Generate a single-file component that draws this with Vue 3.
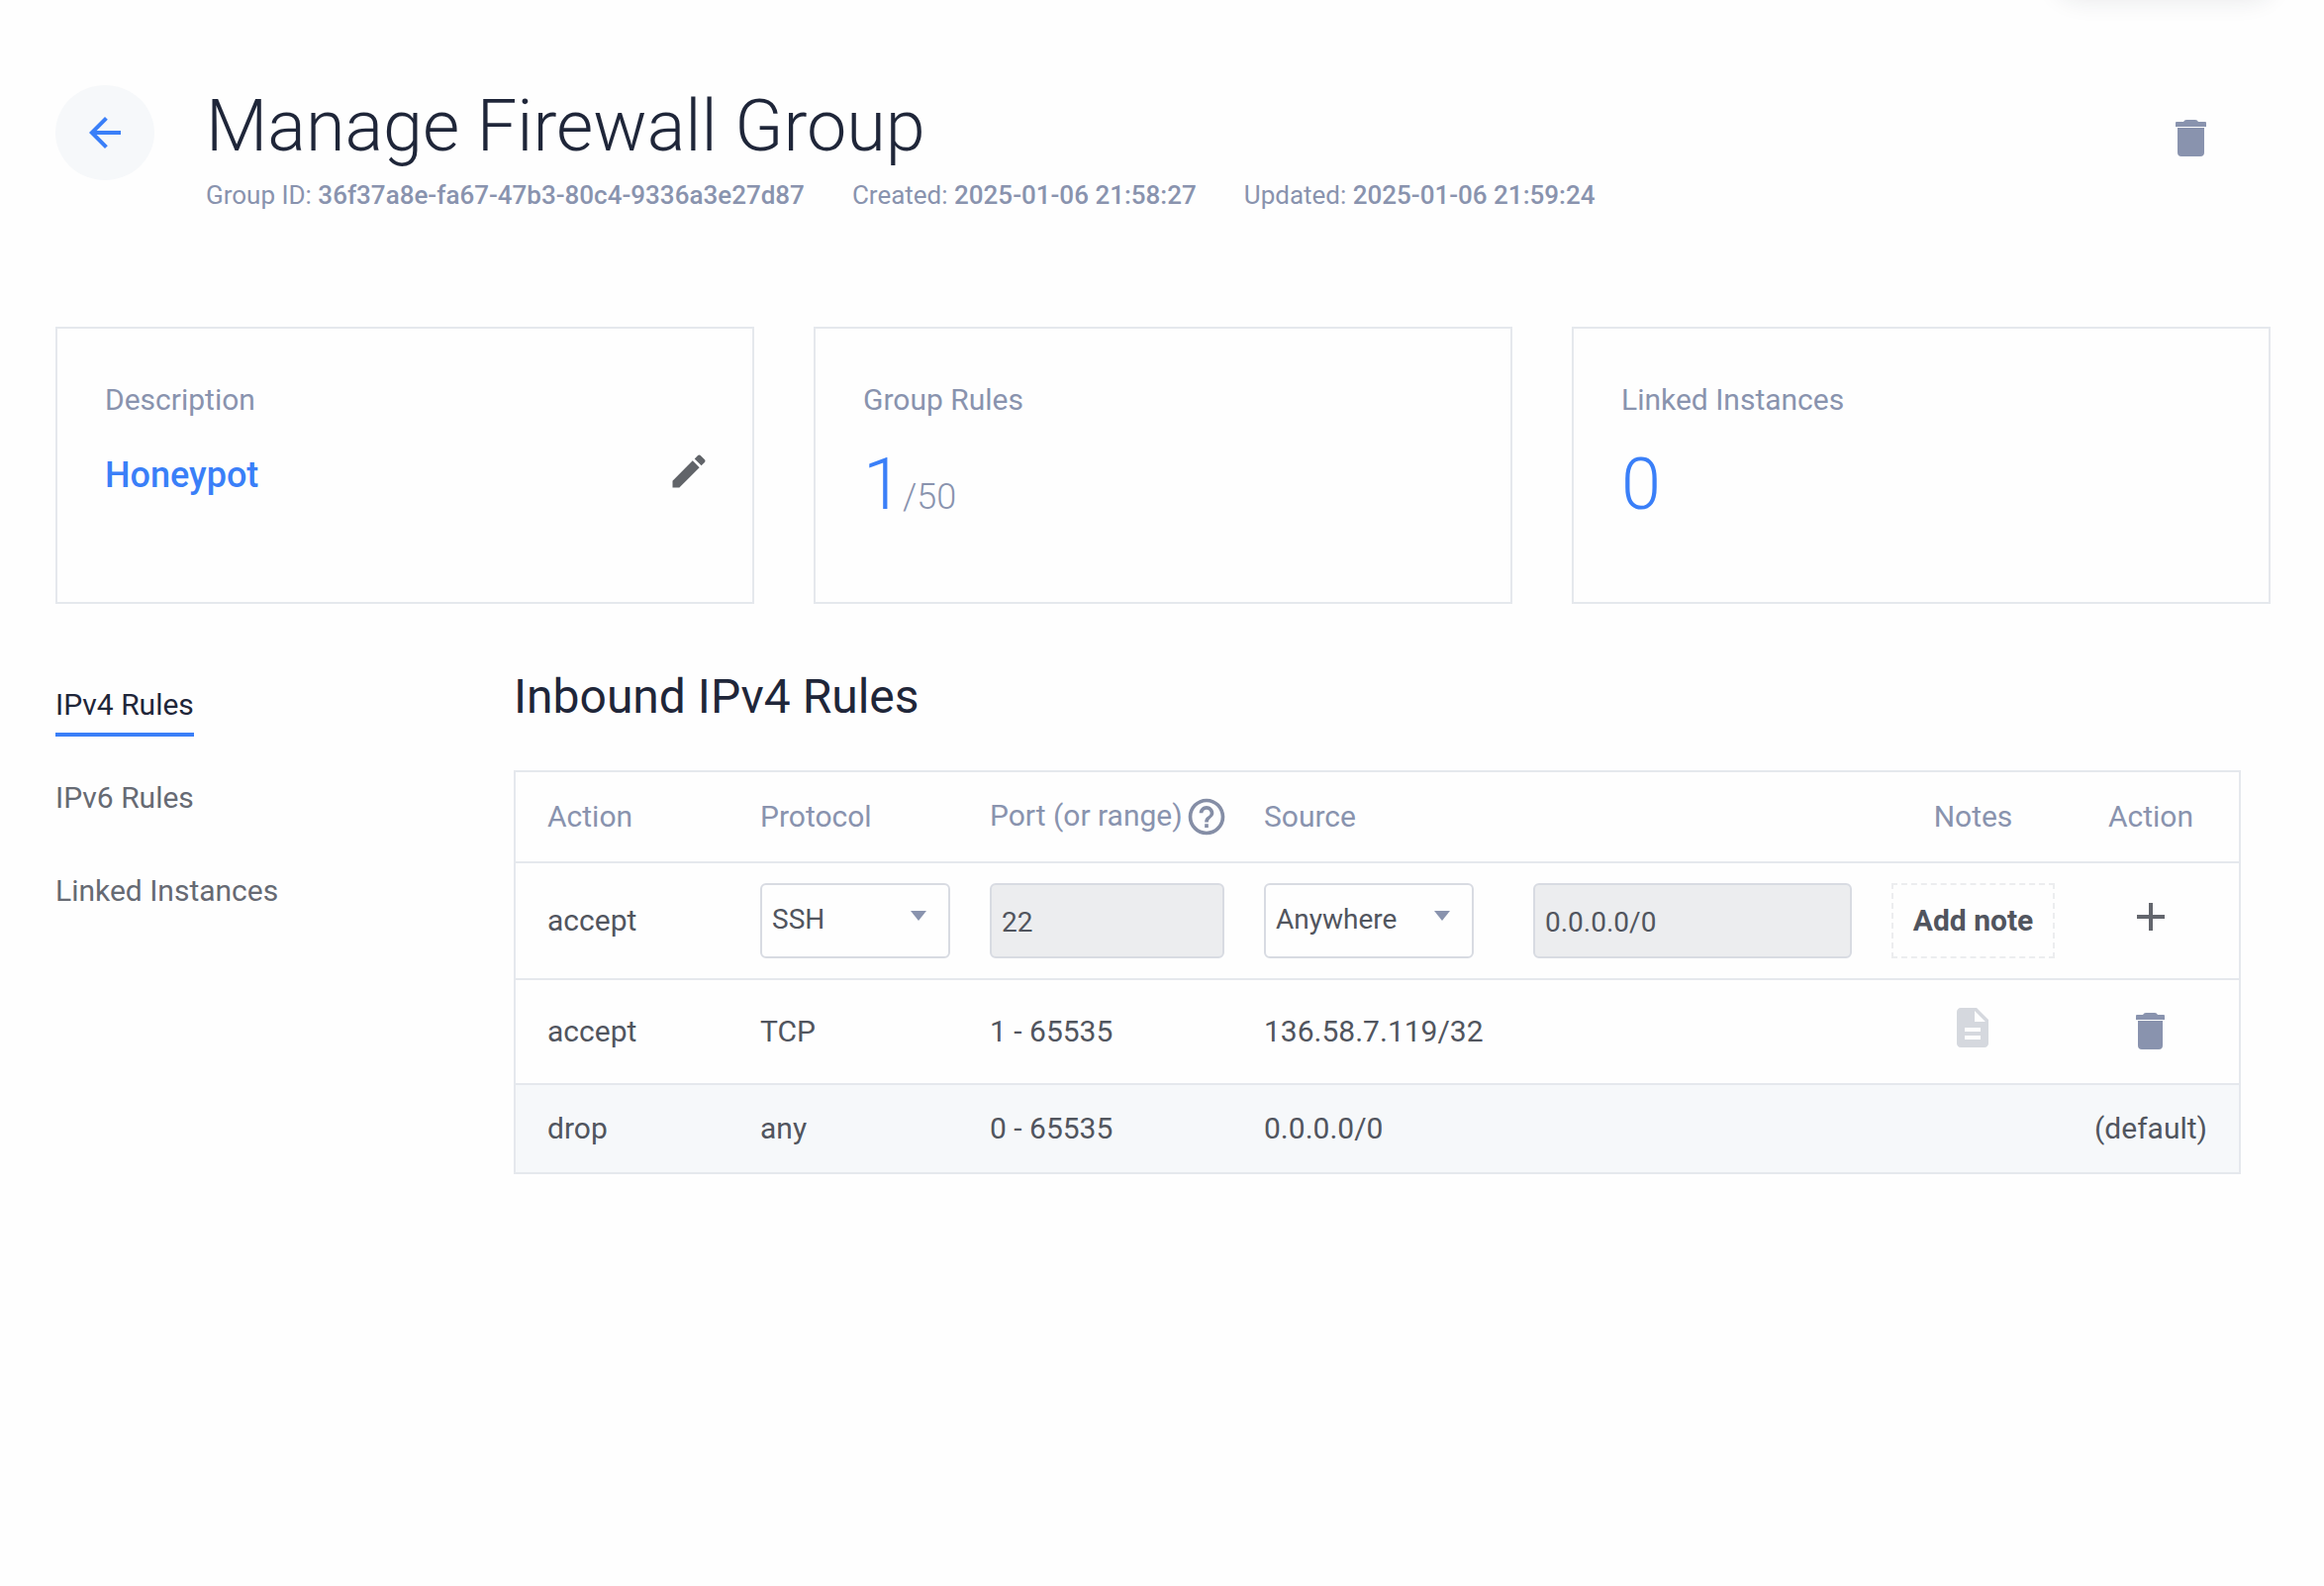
<script setup>
import { reactive } from "vue";

const local_data = reactive({
    group: {
        id: "36f37a8e-fa67-47b3-80c4-9336a3e27d87",
        created: "2025-01-06 21:58:27",
        updated: "2025-01-06 21:59:24",
        description: "Honeypot",
        rules: 1,
        maxRules: 50,
        instances: 0,
    },
    tabs: ["IPv4 Rules", "IPv6 Rules", "Linked Instances"],
    activeTab: 0,
    newRule: {
        action: "accept",
        protocol: "SSH",
        port: "22",
        sourceType: "Anywhere",
        source: "0.0.0.0/0",
    },
    rules: [
        {
            action: "accept",
            protocol: "TCP",
            port: "1 - 65535",
            source: "136.58.7.119/32",
        },
    ],
});

function openTab(index) {
    local_data.activeTab = index;
}
function deleteRule(index) {
    local_data.rules.splice(index, 1);
}
</script>
<template>
    <div class="page">
        <div class="top_shadow"></div>
        <div class="header">
            <button class="back">
                <svg width="48" height="48" viewBox="0 0 24 24">
                    <path
                        d="M20 11H7.83l5.59-5.59L12 4l-8 8 8 8 1.41-1.41L7.83 13H20v-2z"
                    />
                </svg>
            </button>
            <div class="header_text">
                <h1>Manage Firewall Group</h1>
                <div class="meta">
                    <div>Group ID: <b>{{ local_data.group.id }}</b></div>
                    <div>Created: <b>{{ local_data.group.created }}</b></div>
                    <div>Updated: <b>{{ local_data.group.updated }}</b></div>
                </div>
            </div>
            <button class="delete_group">
                <svg width="31" height="37" viewBox="0 0 31 37">
                    <path
                        d="M8 2q1-2 3-2h9q2 0 3 2h7q1 0 1 1v4H0V3q0-1 1-1zM2 8h27v25q0 4-4 4H6q-4 0-4-4z"
                    />
                </svg>
            </button>
        </div>
        <div class="cards">
            <div class="card">
                <div class="card_label">Description</div>
                <div class="card_name">
                    <span>{{ local_data.group.description }}</span>
                    <svg width="44" height="44" viewBox="0 0 24 24">
                        <path
                            d="M3 17.25V21h3.75L17.81 9.94l-3.75-3.75L3 17.25zM20.71 7.04c.39-.39.39-1.02 0-1.41l-2.34-2.34c-.39-.39-1.02-.39-1.41 0l-1.83 1.83 3.75 3.75 1.83-1.83z"
                        />
                    </svg>
                </div>
            </div>
            <div class="card">
                <div class="card_label">Group Rules</div>
                <div class="card_number">
                    {{ local_data.group.rules
                    }}<span>/{{ local_data.group.maxRules }}</span>
                </div>
            </div>
            <div class="card">
                <div class="card_label">Linked Instances</div>
                <div class="card_number">{{ local_data.group.instances }}</div>
            </div>
        </div>
        <div class="content">
            <div class="tabs">
                <div
                    v-for="(tab, index) in local_data.tabs"
                    :key="tab"
                    class="tab"
                    :class="{ tab_active: index == local_data.activeTab }"
                    @click="openTab(index)"
                >
                    {{ tab }}
                </div>
            </div>
            <div class="rules">
                <h2>Inbound IPv4 Rules</h2>
                <div class="table">
                    <div class="row row_head">
                        <div>Action</div>
                        <div>Protocol</div>
                        <div class="port_head">
                            <span>Port (or range)</span>
                            <svg width="44" height="44" viewBox="0 0 24 24">
                                <path
                                    d="M11 18h2v-2h-2v2zm1-16C6.48 2 2 6.48 2 12s4.48 10 10 10 10-4.48 10-10S17.52 2 12 2zm0 18c-4.41 0-8-3.59-8-8s3.59-8 8-8 8 3.59 8 8-3.59 8-8 8zm0-14c-2.21 0-4 1.79-4 4h2c0-1.1.9-2 2-2s2 .9 2 2c0 2-3 1.75-3 5h2c0-2.25 3-2.5 3-5 0-2.21-1.79-4-4-4z"
                                />
                            </svg>
                        </div>
                        <div>Source</div>
                        <div></div>
                        <div class="center">Notes</div>
                        <div class="center">Action</div>
                    </div>
                    <div class="row row_new">
                        <div>{{ local_data.newRule.action }}</div>
                        <div class="field select protocol">
                            <span>{{ local_data.newRule.protocol }}</span>
                            <i class="caret"></i>
                        </div>
                        <div class="field disabled port">
                            {{ local_data.newRule.port }}
                        </div>
                        <div class="field select source_type">
                            <span>{{ local_data.newRule.sourceType }}</span>
                            <i class="caret"></i>
                        </div>
                        <div class="field disabled source">
                            {{ local_data.newRule.source }}
                        </div>
                        <div class="add_note">Add note</div>
                        <div class="center">
                            <svg
                                class="icon_add"
                                width="48"
                                height="48"
                                viewBox="0 0 24 24"
                            >
                                <path d="M19 13h-6v6h-2v-6H5v-2h6V5h2v6h6v2z" />
                            </svg>
                        </div>
                    </div>
                    <div
                        v-for="(rule, index) in local_data.rules"
                        :key="index"
                        class="row row_rule"
                    >
                        <div>{{ rule.action }}</div>
                        <div>{{ rule.protocol }}</div>
                        <div>{{ rule.port }}</div>
                        <div>{{ rule.source }}</div>
                        <div></div>
                        <div class="center">
                            <svg
                                class="icon_note"
                                width="48"
                                height="48"
                                viewBox="0 0 24 24"
                            >
                                <path
                                    d="M14 2H6c-1.1 0-1.99.9-1.99 2L4 20c0 1.1.89 2 1.99 2H18c1.1 0 2-.9 2-2V8l-6-6zm2 16H8v-2h8v2zm0-4H8v-2h8v2zm-3-5V3.5L18.5 9H13z"
                                />
                            </svg>
                        </div>
                        <div class="center" @click="deleteRule(index)">
                            <svg
                                class="icon_delete"
                                width="29"
                                height="37"
                                viewBox="0 0 29 37"
                            >
                                <path
                                    d="M7 2q1-2 3-2h9q2 0 3 2h6q1 0 1 1v4H0V3q0-1 1-1zM2 8h25v25q0 4-4 4H6q-4 0-4-4z"
                                />
                            </svg>
                        </div>
                    </div>
                    <div class="row row_default">
                        <div>drop</div>
                        <div>any</div>
                        <div>0 - 65535</div>
                        <div>0.0.0.0/0</div>
                        <div></div>
                        <div></div>
                        <div class="center">(default)</div>
                    </div>
                </div>
            </div>
        </div>
    </div>
</template>
<style>
body {
    background: #fefefe;
}
</style>
<style scoped>
.page {
    position: relative;
    box-sizing: border-box;
    width: 2348px;
    height: 1602px;
    padding: 86px 54px 0 56px;
    overflow: hidden;
    font-family: Roboto, sans-serif;
    font-size: 30px;
    line-height: 36px;
    color: #51555e;
}

/* lower edge of the floating pill that sits above the page */
.top_shadow {
    position: absolute;
    top: -66px;
    left: 2074px;
    width: 226px;
    height: 60px;
    border-radius: 30px;
    box-shadow: 0 6px 24px rgba(31, 38, 57, 0.1);
}

button {
    display: flex;
    align-items: center;
    justify-content: center;
    padding: 0;
    border: none;
    background: none;
}

.header {
    display: flex;
    height: 244px;
}
.back {
    width: 100px;
    height: 96px;
    border-radius: 50%;
    background: #f6f8fa;
    fill: #3a7ff8;
}
.header_text {
    flex: 1;
    margin-left: 52px;
}
h1 {
    margin: 0;
    font-size: 72px;
    font-weight: 300;
    line-height: 84px;
    color: #1f2639;
}
.meta {
    display: flex;
    gap: 48px;
    margin-top: 12px;
    font-size: 26px;
    line-height: 30px;
    color: #8993ae;
}
.meta b {
    font-weight: 500;
}
.delete_group {
    width: 31px;
    height: 37px;
    margin-top: 35px;
    margin-right: 65px;
    fill: #8993ae;
}

.cards {
    display: grid;
    grid-template-columns: repeat(3, 706px);
    gap: 60px;
}
.card {
    box-sizing: border-box;
    height: 280px;
    padding: 54px 42px 0 48px;
    border: 2px solid #e5e8ed;
}
.card_label {
    color: #8993ae;
}
.card_name {
    display: flex;
    justify-content: space-between;
    margin-top: 32px;
    font-size: 36px;
    font-weight: 500;
    line-height: 52px;
    color: #3a7ff8;
}
.card_name svg {
    fill: #616469;
}
.card_number {
    margin-top: 26px;
    font-size: 72px;
    font-weight: 300;
    line-height: 84px;
    color: #3a7ff8;
}
.card_number span {
    font-size: 36px;
    color: #8993ae;
}

.content {
    display: flex;
    margin-top: 64px;
}
.tabs {
    display: flex;
    flex-direction: column;
    align-items: flex-start;
    gap: 42px;
    width: 463px;
    padding-top: 18px;
}
.tab {
    box-sizing: border-box;
    height: 52px;
    padding-top: 2px;
    color: #666a73;
}
.tab_active {
    border-bottom: 4px solid #3a7ff8;
    color: #1f2639;
}
h2 {
    margin: 0;
    font-size: 48px;
    font-weight: 400;
    line-height: 60px;
    color: #1f2639;
}

.table {
    box-sizing: border-box;
    width: 1745px;
    margin-top: 44px;
    border: 2px solid #e5e8ed;
}
.row {
    display: grid;
    grid-template-columns: 215px 232px 277px 272px 362px 165px 194px;
    align-items: center;
    padding-left: 32px;
    border-bottom: 2px solid #e5e8ed;
}
.row_head {
    height: 90px;
    color: #8993ae;
}
.row_new {
    height: 116px;
}
.row_rule {
    height: 104px;
}
.row_default {
    height: 88px;
    border-bottom: none;
    background: #f6f8fa;
}
.center {
    display: flex;
    justify-content: center;
}

.port_head {
    display: flex;
    align-items: center;
    justify-content: space-between;
    width: 241px;
}
.port_head span {
    margin-top: -2px;
    white-space: nowrap;
}
.port_head svg {
    fill: #858ea6;
}

.field {
    display: flex;
    align-items: center;
    justify-content: space-between;
    box-sizing: border-box;
    height: 76px;
    padding: 0 10px;
    border: 2px solid #d8dbe2;
    border-radius: 6px;
    background: #fefefe;
    font-size: 28px;
}
.select {
    padding: 0 22px 2px 10px;
}
.disabled {
    background: #ecedef;
    padding-top: 4px;
}
.protocol {
    width: 192px;
}
.port {
    width: 237px;
}
.source_type {
    width: 212px;
}
.source {
    width: 322px;
}
.caret {
    margin-bottom: 8px;
    border-top: 10px solid #8993ae;
    border-left: 8px solid transparent;
    border-right: 8px solid transparent;
}
.add_note {
    display: flex;
    align-items: center;
    justify-content: center;
    box-sizing: border-box;
    width: 165px;
    height: 76px;
    border: 2px dashed #ecedef;
    font-weight: 700;
}
.icon_add {
    margin-bottom: 8px;
    fill: #63666d;
}
.icon_note {
    margin-right: 1px;
    margin-bottom: 8px;
    fill: #d5d8de;
}
.icon_delete {
    margin-right: 1px;
    margin-bottom: 1px;
    fill: #8993ae;
}
</style>
